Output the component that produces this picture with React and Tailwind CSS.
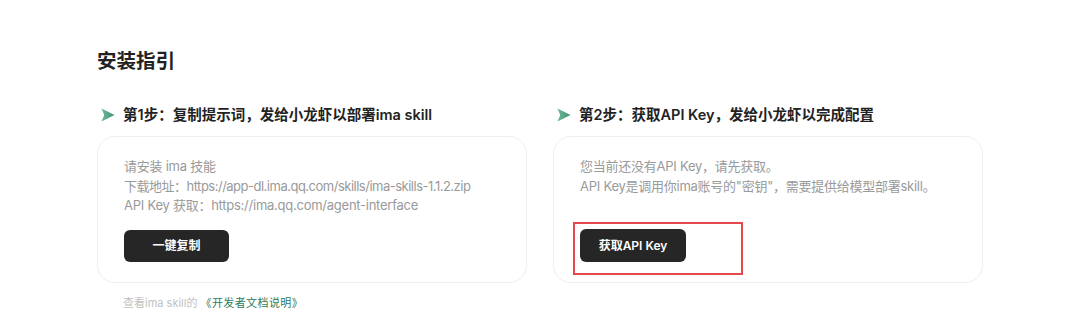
import React from "react";

const font = { fontFamily: '"Inter", "Noto Sans CJK SC", sans-serif' };

function Arrow() {
  return (
    <svg width="14" height="14" viewBox="0 0 14 14" className="shrink-0">
      <defs>
        <linearGradient id="ag" x1="0" y1="0" x2="1" y2="0">
          <stop offset="0" stopColor="#6fb89b" />
          <stop offset="1" stopColor="#3f9273" />
        </linearGradient>
      </defs>
      <path d="M0.5 0.5 L13.5 7 L0.5 13.5 L3.2 7 Z" fill="url(#ag)" />
    </svg>
  );
}

function Step({ title, children }) {
  return (
    <div className="flex flex-col">
      <div className="flex items-center h-[20px] mb-[11px] pl-[4px]">
        <Arrow />
        <span className="ml-[8px] text-[14.5px] leading-[20px] font-semibold text-[#222]">{title}</span>
      </div>
      <div className="rounded-[18px] border border-[#efefef] bg-white h-[147px] px-[26px] pt-[20px] pb-[20px] flex flex-col">
        {children}
      </div>
    </div>
  );
}

export default function App() {
  return (
    <div className="w-[1080px] h-[312px] bg-white overflow-hidden px-[97px] pt-[47px]" style={font}>
      <h1 className="text-[19.5px] leading-[28px] font-semibold text-[#222]">安装指引</h1>
      <div className="mt-[30px] grid grid-cols-2 gap-[26px]">
        <div>
          <Step title="第1步：复制提示词，发给小龙虾以部署ima skill">
            <div className="h-[60px] text-[13px] leading-[19.5px] tracking-[-0.25px] text-[#9a9a9a]">
              <div>请安装 ima 技能</div>
              <div className="tracking-[-0.5px]">下载地址：https://app-dl.ima.qq.com/skills/ima-skills-1.1.2.zip</div>
              <div>API Key 获取：https://ima.qq.com/agent-interface</div>
            </div>
            <button className="mt-[14px] w-[105px] h-[33px] rounded-[6px] bg-[#262626] text-white text-[12px] font-semibold">
              一键复制
            </button>
          </Step>
          <div className="mt-[12px] pl-[26px] text-[11px] leading-[16px]">
            <span className="text-[#c2c2c2]">查看ima skill的 </span>
            <span className="text-[#2f7a59] tracking-[0.4px]">《开发者文档说明》</span>
          </div>
        </div>
        <div>
          <Step title="第2步：获取API Key，发给小龙虾以完成配置">
            <div className="h-[60px] text-[13px] leading-[19.5px] tracking-[-0.25px] text-[#9a9a9a]">
              <div>您当前还没有API Key，请先获取。</div>
              <div>API Key是调用你ima账号的"密钥"，需要提供给模型部署skill。</div>
            </div>
            <div className="relative mt-[14px] w-[106px] h-[33px]">
              <button className="w-[106px] h-[33px] rounded-[6px] bg-[#262626] text-white text-[12px] font-semibold">
                获取API Key
              </button>
              <div className="absolute -left-[7px] -top-[7px] w-[170px] h-[53px] border-2 border-[#e5484a] pointer-events-none" />
            </div>
          </Step>
        </div>
      </div>
    </div>
  );
}
